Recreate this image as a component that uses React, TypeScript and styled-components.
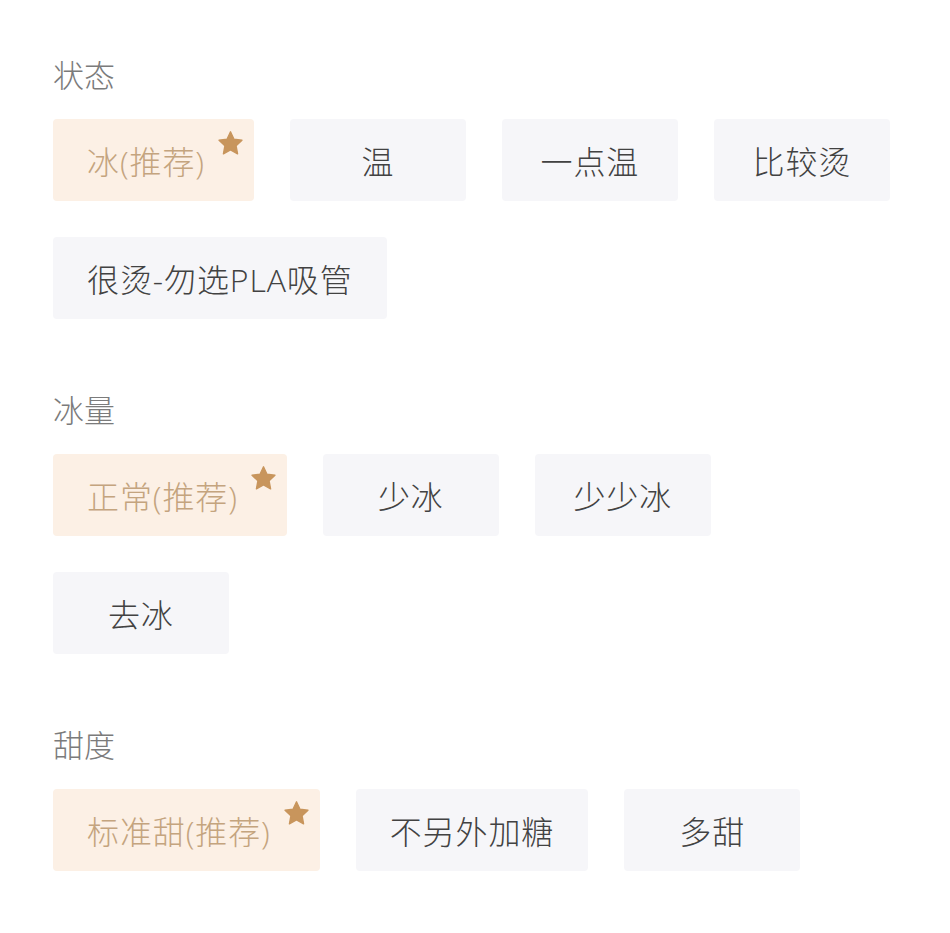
import React, { useState } from 'react'
import styled, { createGlobalStyle } from 'styled-components'

const GlobalStyle = createGlobalStyle`
  body {
    margin: 0;
    background: #ffffff;
    font-family: "Open Sans", "Noto Sans CJK SC", sans-serif;
  }
`

type Group = {
  title: string
  options: string[]
  recommended: number
}

const GROUPS: Group[] = [
  { title: '状态', options: ['冰(推荐)', '温', '一点温', '比较烫', '很烫-勿选PLA吸管'], recommended: 0 },
  { title: '冰量', options: ['正常(推荐)', '少冰', '少少冰', '去冰'], recommended: 0 },
  { title: '甜度', options: ['标准甜(推荐)', '不另外加糖', '多甜'], recommended: 0 },
]

const Page = styled.div`
  padding: 55px 53px 40px;
  display: flex;
  flex-direction: column;
  gap: 71px;
`

const Section = styled.section`
  display: flex;
  flex-direction: column;
  gap: 24px;
`

const Title = styled.div`
  font-size: 31px;
  font-weight: 300;
  line-height: 40px;
  color: #7b7b7b;
`

const Options = styled.div`
  display: flex;
  flex-wrap: wrap;
  gap: 36px;
  width: 850px;
`

const Chip = styled.button<{ $active: boolean }>`
  position: relative;
  height: 82px;
  min-width: 176px;
  padding: ${p => (p.$active ? '0 49px 0 34px' : '0 34px')};
  border: none;
  border-radius: 4px;
  background: ${p => (p.$active ? '#fcf0e5' : '#f6f6f9')};
  color: ${p => (p.$active ? '#c4a47e' : '#424242')};
  font-family: inherit;
  font-size: 32px;
  font-weight: 300;
  letter-spacing: 0.9px;
  cursor: pointer;
  display: flex;
  align-items: center;
  justify-content: center;
`

const Star = styled.svg`
  position: absolute;
  top: 11px;
  right: 10px;
  width: 27px;
  height: 27px;
  fill: #c8955c;
`

const StarIcon = () => (
  <Star viewBox="0 0 24 24">
    <path d="M12 1.6l3.1 6.6 7.1.9-5.2 5 1.3 7.1L12 17.8l-6.3 3.4 1.3-7.1-5.2-5 7.1-.9z" strokeLinejoin="round" stroke="#c8955c" strokeWidth="1.2" />
  </Star>
)

const App = () => {
  const [selected, setSelected] = useState<number[]>(GROUPS.map(g => g.recommended))

  return (
    <>
      <GlobalStyle />
      <Page>
        {GROUPS.map((group, gi) => (
          <Section key={group.title}>
            <Title>{group.title}</Title>
            <Options>
              {group.options.map((opt, oi) => {
                const active = selected[gi] === oi
                return (
                  <Chip
                    key={opt}
                    $active={active}
                    onClick={() => setSelected(s => s.map((v, i) => (i === gi ? oi : v)))}
                  >
                    {opt}
                    {oi === group.recommended && <StarIcon />}
                  </Chip>
                )
              })}
            </Options>
          </Section>
        ))}
      </Page>
    </>
  )
}

export default App
